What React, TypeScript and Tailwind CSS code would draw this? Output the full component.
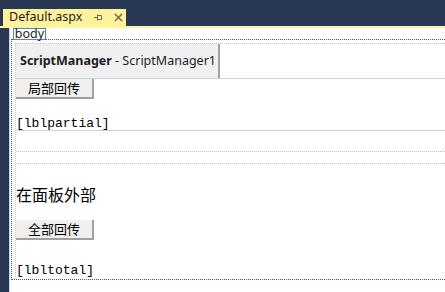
import React from "react";

const PinIcon = () => (
  <svg width="9" height="7" viewBox="0 0 9 7" className="text-[#75694a]">
    <path d="M0 3.5H3M3.5 0.5V6.5M3.5 1.5H7.5V5.5H3.5" fill="none" stroke="currentColor" strokeWidth="1" />
  </svg>
);

const CloseIcon = () => (
  <svg width="9" height="9" viewBox="0 0 9 9" className="text-[#75694a]">
    <path d="M1 1L8 8M8 1L1 8" fill="none" stroke="currentColor" strokeWidth="1.5" />
  </svg>
);

const DesignButton = ({ label }: { label: string }) => (
  <div className="w-[78px] h-[20px] bg-[#f0f0f0] border-r-2 border-b-2 border-[#a0a0a0] flex items-center justify-center text-[13px] text-black font-['Noto_Sans_CJK_SC',sans-serif]">
    {label}
  </div>
);

const App = () => {
  return (
    <div className="w-[445px] h-[292px] bg-white flex flex-col overflow-hidden font-['Noto_Sans','Liberation_Sans',sans-serif]">
      {/* tab strip */}
      <div className="h-[26px] bg-[#293955] pt-[9px] pl-[3px] flex">
        <div className="w-[123px] h-[17px] bg-[#fff29d] flex items-center pl-[6px] text-[12.5px] text-[#1e1e1e]">
          <span className="leading-none">Default.aspx</span>
          <span className="ml-[12px] flex items-center"><PinIcon /></span>
          <span className="ml-[11px] flex items-center"><CloseIcon /></span>
        </div>
      </div>
      <div className="h-[2px] bg-[#fff29d]" />

      <div className="flex flex-1">
        <div className="w-[9px] bg-[#293955]" />
        <div className="w-px bg-[#cdd3e0]" />
        <div className="flex-1 flex flex-col">
          <div className="relative z-10 ml-[3px] w-[33px] h-[12px] border border-[#5b7fc4] bg-white flex items-center justify-center text-[12.5px] leading-[10px] text-[#1e1e1e]">
            body
          </div>
          <div className="ml-px -mt-px h-[241px] border-l border-t border-b border-dotted border-[#2a5cab] pl-[3px] pt-[3px]">
            <div className="h-full border-l border-t border-dotted border-[#c4c4c4] flex flex-col">
              <div className="w-[204px] h-[34px] bg-[#f0f0f0] border-r-2 border-[#a0a0a0] flex items-center pl-[4px] text-[12.5px] text-[#1e1e1e]">
                <span className="font-bold">ScriptManager</span>
                <span className="whitespace-pre"> - ScriptManager1</span>
              </div>
              <div className="border-t border-[#d0d0d0]">
                <DesignButton label="局部回传" />
                <div className="mt-[17px] h-[15px] border-b border-[#d0d0d0] text-[13px] leading-[16px] text-black font-['Liberation_Mono',monospace]">
                  [lblpartial]
                </div>
              </div>
              <div className="mt-[20px] h-[13px] border-y border-dotted border-[#c4c4c4]" />
              <div className="mt-[18px] text-[16px] leading-[24px] text-black font-['Noto_Sans_CJK_SC',sans-serif]">
                在面板外部
              </div>
              <div className="mt-[14px]">
                <DesignButton label="全部回传" />
              </div>
              <div className="mt-[23px] text-[13px] leading-[16px] text-black font-['Liberation_Mono',monospace]">
                [lbltotal]
              </div>
            </div>
          </div>
        </div>
      </div>
    </div>
  );
};

export default App;
